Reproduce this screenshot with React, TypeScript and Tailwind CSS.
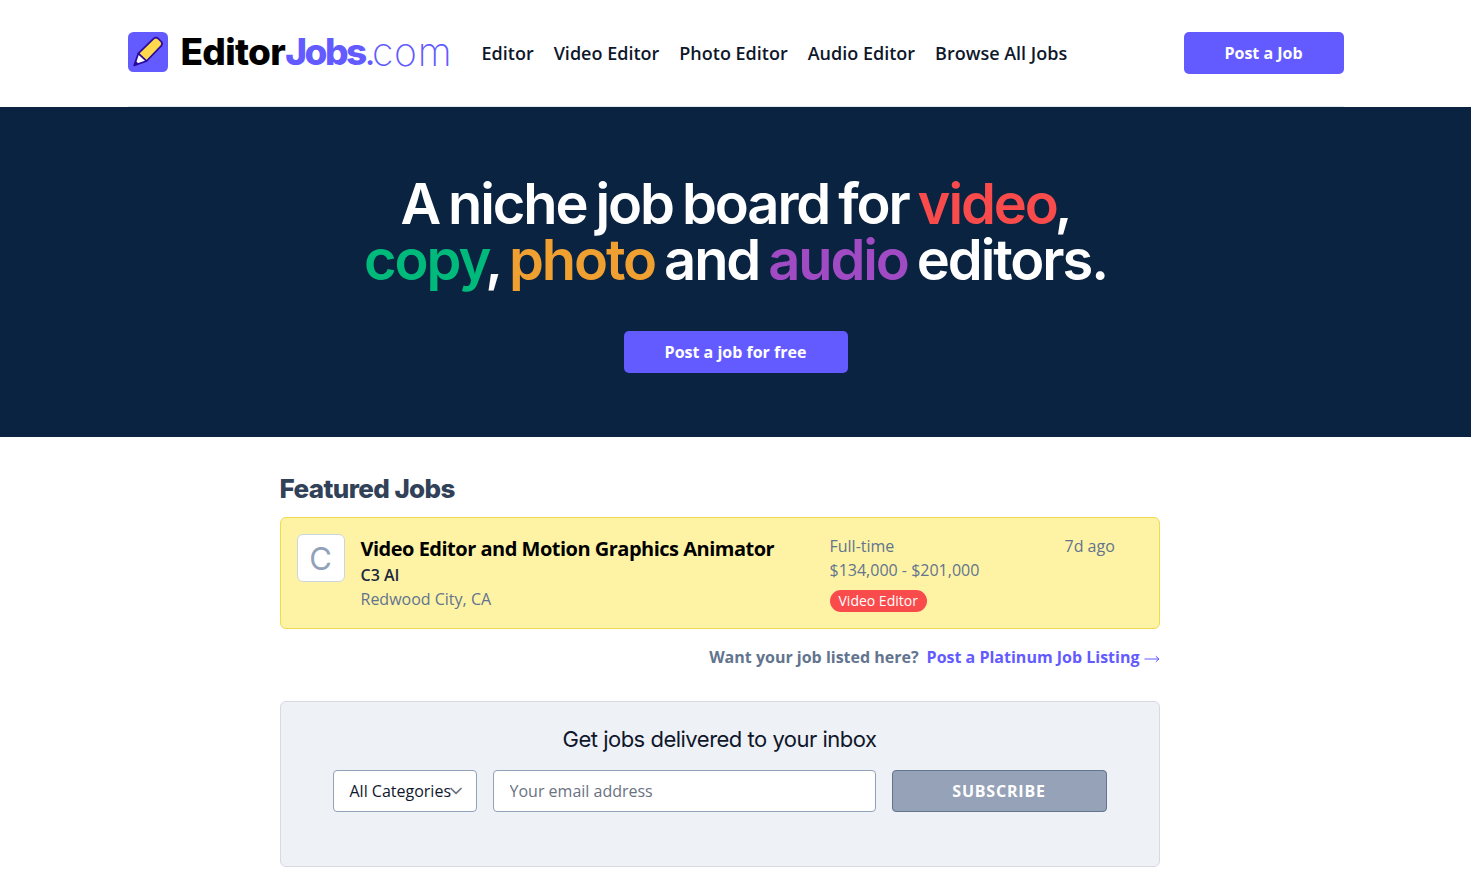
import { useState } from 'react';

interface Job {
  id: string;
  title: string;
  company: string;
  location: string;
  type: string;
  salary: string;
  category: string;
  posted: string;
}

const navLinks = ['Editor', 'Video Editor', 'Photo Editor', 'Audio Editor', 'Browse All Jobs'];

const featuredJobs: Job[] = [
  {
    id: 'c3-ai-video-editor',
    title: 'Video Editor and Motion Graphics Animator',
    company: 'C3 AI',
    location: 'Redwood City, CA',
    type: 'Full-time',
    salary: '$134,000 - $201,000',
    category: 'Video Editor',
    posted: '7d ago',
  },
];

function Logo() {
  return (
    <a href="#" className="flex w-[323px] items-center">
      <svg width="40" height="40" viewBox="0 0 40 40" className="shrink-0">
        <rect width="40" height="40" rx="5.5" fill="#635bff" />
        <g stroke="#2a0a9b" strokeWidth="1.7" strokeLinejoin="round">
          <path d="M6.2 33.4 L10.4 21.4 L18.6 29 Z" fill="#fff" />
          <path d="M10.4 21.4 L25.6 6.6 Q27.8 4.8 30 6.4 L33.2 9.5 Q35 11.7 33.2 13.9 L18.6 29 Z" fill="#ffd84d" />
        </g>
        <path d="M6 33.8 L7.6 28.8 L10.6 31.8 Z" fill="#2a0a9b" />
      </svg>
      <span className="ml-[13px] flex font-['Inter',sans-serif] text-[37px] leading-10 whitespace-nowrap">
        <span className="font-extrabold tracking-[-0.7px] text-black">Editor</span>
        <span className="font-extrabold tracking-[-2.5px] text-[#635bff]">Jobs</span>
        <span className="font-normal tracking-[-3.5px] text-[#635bff]">.</span>
        <span className="text-[39px] font-extralight tracking-[0.8px] text-[#635bff]">com</span>
      </span>
    </a>
  );
}

function Header() {
  return (
    <header className="mx-auto flex h-[107px] w-[1216px] items-start border-b border-slate-200 pt-8">
      <Logo />
      <nav className="mt-[7px] ml-[31px] flex gap-5 text-lg font-semibold whitespace-nowrap text-slate-900">
        {navLinks.map((link) => (
          <a key={link} href="#">
            {link}
          </a>
        ))}
      </nav>
      <a
        href="#"
        className="ml-auto flex h-[42px] w-40 items-center justify-center rounded-[5px] bg-[#635bff] font-bold text-white"
      >
        Post a Job
      </a>
    </header>
  );
}

function Hero() {
  return (
    <section className="flex h-[330px] flex-col items-center bg-[#0a2340] pt-[69px]">
      <h1 className="text-center font-['Inter',sans-serif] text-[56px] leading-14 font-semibold tracking-[-2.1px] whitespace-nowrap text-white [word-spacing:-3px]">
        <span className="block">
          A niche job board for <span className="text-[#f94b4b]">video</span>
          <span className="-ml-0.5">,</span>
        </span>
        <span className="block">
          <span className="text-[#00ba7c]">copy</span>
          <span className="-ml-1">,</span> <span className="text-[#f0a030]">photo</span> and{' '}
          <span className="text-[#a04bc4]">audio</span> editors.
        </span>
      </h1>
      <a
        href="#"
        className="mt-[43px] flex h-[42px] w-56 items-center justify-center rounded-[5px] bg-[#635bff] font-bold text-white"
      >
        Post a job for free
      </a>
    </section>
  );
}

function JobCard({ job }: { job: Job }) {
  return (
    <article className="flex h-28 rounded-md border border-[#eedc50] bg-[#fef3a5] p-4 text-slate-500">
      <div className="flex size-12 shrink-0 items-center justify-center rounded-md border border-slate-300 bg-white">
        <span className="font-['Inter',sans-serif] text-[31px] leading-none text-slate-400">{job.company[0]}</span>
      </div>
      <div className="ml-4 w-[469px]">
        <h3 className="mt-px text-xl leading-7 font-bold tracking-[-0.5px] text-black">{job.title}</h3>
        <p className="font-semibold text-slate-800">{job.company}</p>
        <p>{job.location}</p>
      </div>
      <div className="w-[235px]">
        <p>{job.type}</p>
        <p>{job.salary}</p>
        <span className="mt-2 flex h-[22px] w-fit items-center rounded-full bg-[#f94b4b] px-[9px] text-sm text-white">
          {job.category}
        </span>
      </div>
      <p>{job.posted}</p>
    </article>
  );
}

function SubscribeForm() {
  const [email, setEmail] = useState('');

  return (
    <form
      onSubmit={(e) => e.preventDefault()}
      className="mt-8 h-[166px] rounded-md border border-[#d6d9de] bg-[#eef1f6] px-[52px] pt-[21px]"
    >
      <h2 className="text-center font-['Inter',sans-serif] text-[22px] leading-8 tracking-[-0.5px] text-slate-900">
        Get jobs delivered to your inbox
      </h2>
      <div className="mt-[15px] flex gap-4">
        <button
          type="button"
          className="flex h-[42px] w-36 items-center rounded-[4px] border border-slate-400 bg-white pl-4 whitespace-nowrap text-slate-900"
        >
          All Categories
          <svg width="12" height="8" viewBox="0 0 12 8" fill="none" className="-ml-px shrink-0">
            <path d="M1 1.5 L6 6.3 L11 1.5" stroke="#6b7280" strokeWidth="1.7" strokeLinecap="round" strokeLinejoin="round" />
          </svg>
        </button>
        <input
          type="email"
          value={email}
          onChange={(e) => setEmail(e.target.value)}
          placeholder="Your email address"
          className="h-[42px] w-[383px] rounded-[4px] border border-slate-400 bg-white px-4 placeholder:text-gray-500"
        />
        <button
          type="submit"
          className="h-[42px] flex-1 rounded-[4px] border border-slate-500 bg-[#96a2b8] font-bold tracking-[0.8px] text-white"
        >
          SUBSCRIBE
        </button>
      </div>
    </form>
  );
}

export default function App() {
  return (
    <div className="h-[880px] overflow-hidden bg-white font-['Open_Sans',sans-serif] text-base">
      <Header />
      <Hero />
      <main className="mx-auto w-[1216px] px-[152px]">
        <div className="w-[880px]">
          <h2 className="mt-9 font-['Inter',sans-serif] text-[26px] leading-8 font-extrabold tracking-[-0.6px] text-slate-700">
            Featured Jobs
          </h2>
          <div className="mt-3">
            {featuredJobs.map((job) => (
              <JobCard key={job.id} job={job} />
            ))}
          </div>
          <p className="mt-4 flex justify-end gap-2 font-bold whitespace-nowrap text-slate-500">
            Want your job listed here?
            <a href="#" className="flex items-center gap-1 text-[#635bff]">
              Post a Platinum Job Listing
              <svg width="16" height="8" viewBox="0 0 16 8" fill="none" className="mt-[3px]">
                <path d="M0.5 4 H15 M11.8 1.2 L15 4 L11.8 6.8" stroke="currentColor" strokeWidth="1" />
              </svg>
            </a>
          </p>
          <SubscribeForm />
        </div>
      </main>
    </div>
  );
}
